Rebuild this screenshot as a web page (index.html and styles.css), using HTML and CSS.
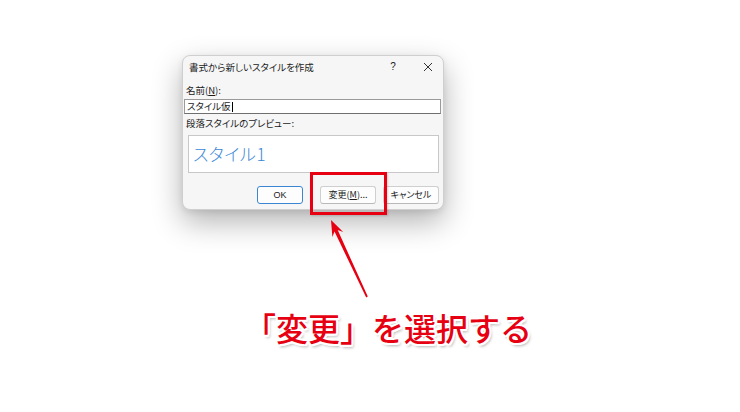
FILE: index.html
```html
<!DOCTYPE html>
<html lang="ja">
<head>
<meta charset="utf-8">
<title>書式から新しいスタイルを作成</title>
<link rel="stylesheet" href="styles.css">
</head>
<body>
<div class="stage">
  <div class="dialog">
    <div class="titlebar">
      <span class="title">書式から新しいスタイルを作成</span>
      <span class="tb-btn help">?</span>
      <span class="tb-btn close">
        <svg width="10" height="10" viewBox="0 0 10 10"><path d="M1 1L9 9M9 1L1 9" stroke="#333" stroke-width="1" fill="none"/></svg>
      </span>
    </div>
    <div class="body">
      <div class="label">名前(<u>N</u>):</div>
      <div class="input">スタイル仮<span class="caret"></span></div>
      <div class="label label2">段落スタイルのプレビュー:</div>
      <div class="preview"><span class="preview-text">スタイル1</span></div>
      <div class="buttons">
        <span class="btn default">OK</span>
        <span class="btn modify">変更(<u>M</u>)...</span>
        <span class="btn">キャンセル</span>
      </div>
    </div>
  </div>
  <div class="caption">「変更」を選択する</div>

  <div class="highlight"></div>
  <svg class="arrow" width="740" height="412" viewBox="0 0 740 412">
    <polygon points="331,220 343.2,232 337.7,230.1 367.8,296.6 366.2,297.4 334.5,231.6 332.4,237" fill="#e60012"/>
  </svg>
</div>
</body>
</html>
```
FILE: styles.css
```css
html, body {
  margin: 0;
  padding: 0;
  background: #ffffff;
}
.stage {
  position: relative;
  width: 740px;
  height: 412px;
  overflow: hidden;
  padding: 55px 0 0 182px;
  box-sizing: border-box;
  font-family: "Noto Sans CJK JP", "Noto Sans", sans-serif;
}
.dialog {
  width: 262px;
  height: 155px;
  box-sizing: border-box;
  border: 1px solid #cfcfcf;
  border-radius: 8px;
  background: #f6f6f6;
  box-shadow: 0 12px 30px rgba(0, 0, 0, 0.3), 0 2px 6px rgba(0, 0, 0, 0.08);
  color: #1b1b1b;
  font-size: 9.5px;
  font-feature-settings: "palt";
}
.titlebar {
  height: 21px;
  display: flex;
  align-items: center;
  padding-left: 6px;
}
.title {
  flex: 1;
  font-size: 9.5px;
  line-height: 12px;
}
.tb-btn {
  width: 30px;
  height: 21px;
  display: flex;
  align-items: center;
  justify-content: center;
  font-size: 10px;
}
.help {
  margin-right: 5px;
  font-family: "Liberation Sans", sans-serif;
}
.body {
  padding: 7px 2px 0 1px;
}
.label {
  height: 12px;
  line-height: 12px;
  padding-left: 2px;
}
.label u {
  text-underline-offset: 1px;
}
.input {
  margin-top: 3px;
  height: 15px;
  box-sizing: border-box;
  background: #ffffff;
  border: 1px solid #9a9a9a;
  border-bottom-color: #6f6f6f;
  line-height: 13px;
  padding-left: 2px;
  display: flex;
  align-items: center;
}
.caret {
  display: inline-block;
  width: 1px;
  height: 10px;
  background: #000;
  margin-left: 1px;
}
.label2 {
  margin-top: 3px;
}
.preview {
  margin: 6px 2px 0 4px;
  height: 38px;
  box-sizing: border-box;
  background: #ffffff;
  border: 1px solid #c8c8c8;
  display: flex;
  align-items: center;
  padding-left: 4px;
}
.preview-text {
  font-size: 17px;
  font-weight: 300;
  color: #3a88d6;
  letter-spacing: 0.6px;
  line-height: 20px;
}
.buttons {
  margin-top: 13px;
  display: flex;
  justify-content: flex-end;
  gap: 7px;
  padding-right: 2px;
}
.btn {
  width: 56px;
  height: 18px;
  box-sizing: border-box;
  border: 1px solid #cfcfcf;
  border-bottom-color: #b9b9b9;
  border-radius: 3px;
  background: #fdfdfd;
  display: flex;
  align-items: center;
  justify-content: center;
  font-size: 9px;
  line-height: 12px;
}
.btn.default {
  width: 46px;
  border: 1px solid #3a86d2;
  margin-right: 10px;
  font-family: "Liberation Sans", "Noto Sans CJK JP", sans-serif;
}
.caption {
  margin: 101px 0 0 62px;
  font-size: 32px;
  line-height: 32px;
  font-weight: 500;
  color: #e60012;
  white-space: nowrap;
  font-feature-settings: normal;
  text-shadow:
    2px 0 0 #fff, -2px 0 0 #fff, 0 2px 0 #fff, 0 -2px 0 #fff,
    1.5px 1.5px 0 #fff, -1.5px 1.5px 0 #fff, 1.5px -1.5px 0 #fff, -1.5px -1.5px 0 #fff,
    2px 3px 3px rgba(0, 0, 0, 0.3);
}
.highlight {
  position: absolute;
  left: 310px;
  top: 172px;
  width: 77px;
  height: 43px;
  box-sizing: border-box;
  border: 3px solid #e60012;
  box-shadow: 1px 1px 2px rgba(0, 0, 0, 0.15);
}
.arrow {
  position: absolute;
  left: 0;
  top: 0;
  pointer-events: none;
}
```
